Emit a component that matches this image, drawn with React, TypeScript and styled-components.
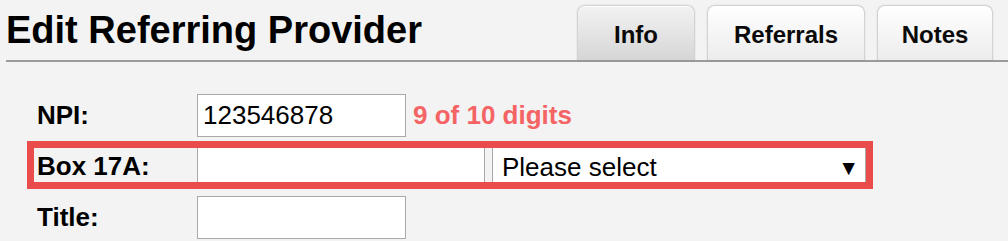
import styled, { createGlobalStyle } from 'styled-components';

const GlobalStyle = createGlobalStyle`
  html, body {
    margin: 0;
    padding: 0;
    background: #f3f3f3;
    font-family: "Liberation Sans", Arial, sans-serif;
  }
`;

const Page = styled.div`
  width: 1008px;
  height: 241px;
  overflow: hidden;
`;

const Header = styled.div`
  display: flex;
  justify-content: space-between;
  align-items: flex-end;
  margin-left: 6px;
  padding: 5px 15px 0 0;
  border-bottom: 2px solid #9b9b9b;
`;

const Title = styled.h1`
  align-self: flex-start;
  margin: 6px 0 0 0;
  font-size: 38px;
  line-height: 38px;
  font-weight: bold;
  color: #000;
`;

const Tabs = styled.div`
  display: flex;
  gap: 12px;
`;

const Tab = styled.div<{ $active?: boolean; $width: number }>`
  box-sizing: border-box;
  width: ${(p) => p.$width}px;
  height: 55px;
  padding-top: 17px;
  border: 1px solid #d2d2d2;
  border-bottom: none;
  border-radius: 8px 8px 0 0;
  box-shadow: 0 0 2px rgba(0, 0, 0, 0.12), inset 0 1px 0 #fff;
  background: ${(p) =>
    p.$active
      ? 'linear-gradient(#f2f2f2, #d6d6d6)'
      : 'linear-gradient(#ffffff, #ececec)'};
  text-align: center;
  font-size: 24px;
  line-height: 23px;
  font-weight: bold;
  color: #0a0a0a;
`;

const Form = styled.div`
  display: flex;
  flex-direction: column;
  align-items: flex-start;
  gap: 8px;
  padding: 32px 0 0 37px;
`;

const Row = styled.div<{ $highlight?: boolean }>`
  position: relative;
  display: flex;
  align-items: center;
  height: 43px;

  ${(p) =>
    p.$highlight &&
    `
    &::after {
      content: '';
      position: absolute;
      top: -4px;
      bottom: -1px;
      left: -10px;
      right: -7px;
      border: 7px solid #e94c4a;
      pointer-events: none;
    }
  `}
`;

const Label = styled.label`
  width: 160px;
  flex: none;
  font-size: 26px;
  font-weight: bold;
  color: #000;
`;

const TextInput = styled.input<{ $width: number }>`
  box-sizing: border-box;
  width: ${(p) => p.$width}px;
  height: 43px;
  margin: 0;
  padding: 0 5px;
  border: 1px solid #a9a9a9;
  border-radius: 0;
  background: #fff;
  font-family: "Liberation Sans", Arial, sans-serif;
  font-size: 26px;
  color: #000;
  outline: none;
`;

const Hint = styled.span`
  margin-left: 7px;
  font-size: 26px;
  font-weight: bold;
  color: #f46464;
`;

const SelectWrap = styled.div`
  position: relative;
  margin-left: 7px;
`;

const Select = styled.select`
  box-sizing: border-box;
  width: 374px;
  height: 43px;
  margin: 0;
  padding: 0 9px;
  border: 1px solid #a9a9a9;
  border-radius: 0;
  background: #fff;
  appearance: none;
  font-family: "Liberation Sans", Arial, sans-serif;
  font-size: 26px;
  color: #000;
  outline: none;
`;

const Arrow = styled.span`
  position: absolute;
  right: 7px;
  top: 50%;
  transform: translateY(-50%);
  font-size: 21px;
  line-height: 1;
  color: #000;
  pointer-events: none;
`;

export default function App() {
  return (
    <Page>
      <GlobalStyle />
      <Header>
        <Title>Edit Referring Provider</Title>
        <Tabs>
          <Tab $active $width={118}>Info</Tab>
          <Tab $width={158}>Referrals</Tab>
          <Tab $width={116}>Notes</Tab>
        </Tabs>
      </Header>
      <Form>
        <Row>
          <Label>NPI:</Label>
          <TextInput $width={209} defaultValue="123546878" />
          <Hint>9 of 10 digits</Hint>
        </Row>
        <Row $highlight>
          <Label>Box 17A:</Label>
          <TextInput $width={288} />
          <SelectWrap>
            <Select defaultValue="">
              <option value="">Please select</option>
            </Select>
            <Arrow>▼</Arrow>
          </SelectWrap>
        </Row>
        <Row>
          <Label>Title:</Label>
          <TextInput $width={209} />
        </Row>
      </Form>
    </Page>
  );
}
